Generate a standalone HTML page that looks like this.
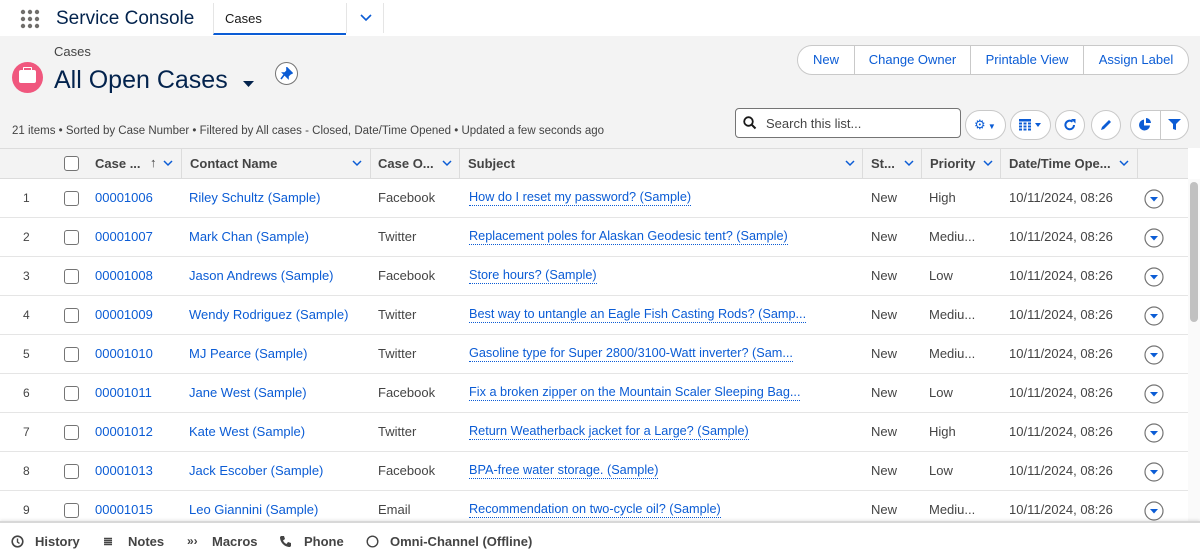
<!DOCTYPE html>
<html><head><meta charset="utf-8"><style>
*{box-sizing:border-box;margin:0;padding:0}
body{width:1200px;height:560px;overflow:hidden;background:#fff;font-family:"Liberation Sans",Arial,sans-serif;color:#181818;position:relative}
.a{position:absolute;white-space:nowrap}
.top{position:absolute;left:0;top:0;width:1200px;height:36px;background:#fff}
.hdr{position:absolute;left:0;top:36px;width:1200px;height:112px;background:#f3f3f3}
.th{position:absolute;top:148px;height:31px;width:1188px;background:#f3f3f3;border-top:1px solid #dcdcdc;border-bottom:1px solid #dcdcdc;font-size:13px;font-weight:bold;color:#444}
.th .c{position:absolute;top:0;height:29px;line-height:29px;border-right:1px solid #dcdcdc}
.chev{position:absolute;top:9px;width:10px;height:10px}
.row{position:absolute;left:0;width:1188px;height:39px;border-bottom:1px solid #e5e5e5;font-size:13px;color:#444}
.row span{position:absolute;top:11px;line-height:16px}
.lnk{color:#0b5cd5}
.sub{color:#0b5cd5;border-bottom:1px dotted #0b5cd5;line-height:15px!important;font-size:12.7px}
.cb{position:absolute;width:15px;height:15px;border:1px solid #747474;border-radius:3px;background:#fff}
.btn{position:absolute;height:30px;border:1px solid #c9c9c9;background:#fff;border-radius:15px}
</style></head><body>
<div class="top"></div>
<svg class="a" style="left:20px;top:9px" width="20" height="20"><g fill="#706e6b"><circle cx="3" cy="3" r="2.2"/><circle cx="10" cy="3" r="2.2"/><circle cx="17" cy="3" r="2.2"/><circle cx="3" cy="10" r="2.2"/><circle cx="10" cy="10" r="2.2"/><circle cx="17" cy="10" r="2.2"/><circle cx="3" cy="17" r="2.2"/><circle cx="10" cy="17" r="2.2"/><circle cx="17" cy="17" r="2.2"/></g></svg>
<div class="a" style="left:56px;top:8px;font-size:19px;color:#03234d">Service Console</div>
<div class="a" style="left:213px;top:3px;width:133px;height:32px;border-bottom:2px solid #0b5cd5;border-left:1px solid #e5e5e5;font-size:13px;padding:8px 0 0 11px;color:#181818">Cases</div>
<div class="a" style="left:346px;top:3px;width:38px;height:30px;border-left:1px solid #e5e5e5;border-right:1px solid #e5e5e5"></div>
<svg class="a" style="left:360px;top:14px" width="12" height="8"><path d="M1 1l5 5 5-5" stroke="#0b5cd5" stroke-width="1.6" fill="none"/></svg>
<div class="hdr"></div>
<div class="a" style="left:54px;top:44px;font-size:13px;color:#444">Cases</div>
<div class="a" style="left:12px;top:62px;width:31px;height:31px;border-radius:50%;background:#f0577e"></div>
<div class="a" style="left:19px;top:70px;width:17px;height:13px;background:#fff;border-radius:2px"></div>
<div class="a" style="left:23px;top:67px;width:9px;height:5px;border:1.5px solid #fff;border-bottom:none;border-radius:1px"></div>
<div class="a" style="left:54px;top:66px;font-size:25px;color:#03234d">All Open Cases</div>
<svg class="a" style="left:243px;top:81px" width="12" height="8"><path d="M0 0h11l-5.5 6z" fill="#03234d"/></svg>
<div class="a" style="left:275px;top:62px;width:23px;height:23px;border:1px solid #747474;border-radius:50%;background:#fff"></div>
<svg class="a" style="left:280px;top:67px" width="13" height="13"><path d="M7 1l5 5-2 1-2 2 0 2-5-5 2 0 2-2z M4 8l-3 4" stroke="#0b5cd5" stroke-width="1.6" fill="#0b5cd5"/></svg>
<div class="a" style="left:12px;top:125px;font-size:11.5px;color:#444">21 items • Sorted by Case Number • Filtered by All cases - Closed, Date/Time Opened • Updated a few seconds ago</div>
<div class="btn" style="left:797px;top:45px;width:392px;height:30px;font-size:13px;color:#0b5cd5">
<span class="a" style="left:0;width:57px;height:28px;border-right:1px solid #c9c9c9;text-align:center;line-height:28px">New</span>
<span class="a" style="left:57px;width:116px;height:28px;border-right:1px solid #c9c9c9;text-align:center;line-height:28px">Change Owner</span>
<span class="a" style="left:173px;width:113px;height:28px;border-right:1px solid #c9c9c9;text-align:center;line-height:28px">Printable View</span>
<span class="a" style="left:286px;width:104px;height:28px;text-align:center;line-height:28px">Assign Label</span></div>
<div class="a" style="left:735px;top:108px;width:226px;height:30px;border:1px solid #747474;border-radius:4px;background:#fff"></div>
<svg class="a" style="left:743px;top:116px" width="14" height="14"><circle cx="5.5" cy="5.5" r="4.3" stroke="#181818" stroke-width="1.8" fill="none"/><path d="M8.5 8.5l4 4" stroke="#181818" stroke-width="2"/></svg>
<div class="a" style="left:766px;top:116px;font-size:13px;color:#444">Search this list...</div>
<div class="btn" style="left:965px;top:110px;width:41px"></div>
<div class="a" style="left:974px;top:117px;font-size:13px;color:#0b5cd5">⚙<span style="font-size:8px"> ▼</span></div>
<div class="btn" style="left:1010px;top:110px;width:41px"></div>
<svg class="a" style="left:1019px;top:119px" width="12" height="12"><g fill="#0b5cd5"><rect x="0" y="0" width="12" height="2.5"/><rect x="0" y="3.5" width="3" height="2"/><rect x="4.5" y="3.5" width="3" height="2"/><rect x="9" y="3.5" width="3" height="2"/><rect x="0" y="6.5" width="3" height="2"/><rect x="4.5" y="6.5" width="3" height="2"/><rect x="9" y="6.5" width="3" height="2"/><rect x="0" y="9.5" width="3" height="2"/><rect x="4.5" y="9.5" width="3" height="2"/><rect x="9" y="9.5" width="3" height="2"/></g></svg>
<svg class="a" style="left:1035px;top:123px" width="6" height="4"><path d="M0 0h6l-3 4z" fill="#0b5cd5"/></svg>
<div class="btn" style="left:1055px;top:110px;width:30px"></div>
<svg class="a" style="left:1063px;top:118px" width="14" height="14"><path d="M11 7a4.3 4.3 0 1 1-1.5-3.3" stroke="#0b5cd5" stroke-width="2" fill="none"/><path d="M8 1h4.5v4.5z" fill="#0b5cd5"/></svg>
<div class="btn" style="left:1091px;top:110px;width:30px"></div>
<svg class="a" style="left:1099px;top:118px" width="14" height="14"><path d="M2 12l1-3 7-7 2 2-7 7z" fill="#0b5cd5"/></svg>
<div class="btn" style="left:1130px;top:110px;width:59px"></div>
<div class="a" style="left:1160px;top:111px;width:1px;height:28px;background:#c9c9c9"></div>
<svg class="a" style="left:1138px;top:118px" width="14" height="14"><path d="M6 1.5a5.5 5.5 0 1 0 6 6H6z" fill="#0b5cd5"/><path d="M8 0v5h5A5 5 0 0 0 8 0z" fill="#0b5cd5"/></svg>
<svg class="a" style="left:1168px;top:118px" width="13" height="13"><path d="M0 1h13l-5 5v6l-3-1v-5z" fill="#0b5cd5"/></svg>

<div class="th">
<div class="c" style="left:0;width:55px;border:none"></div>
<div class="cb" style="left:64px;top:7px"></div>
<div class="c" style="left:83px;width:99px;padding-left:12px;border-left:none">Case ...</div>
<div class="a" style="left:150px;top:6px;color:#444;font-size:13px">↑</div>
<svg class="chev" style="left:163px"><path d="M1 3l4 4 4-4" stroke="#0b5cd5" stroke-width="1.5" fill="none"/></svg>
<div class="c" style="left:182px;width:189px;padding-left:8px">Contact Name</div>
<svg class="chev" style="left:352px"><path d="M1 3l4 4 4-4" stroke="#0b5cd5" stroke-width="1.5" fill="none"/></svg>
<div class="c" style="left:371px;width:89px;padding-left:7px">Case O...</div>
<svg class="chev" style="left:442px"><path d="M1 3l4 4 4-4" stroke="#0b5cd5" stroke-width="1.5" fill="none"/></svg>
<div class="c" style="left:460px;width:403px;padding-left:8px">Subject</div>
<svg class="chev" style="left:845px"><path d="M1 3l4 4 4-4" stroke="#0b5cd5" stroke-width="1.5" fill="none"/></svg>
<div class="c" style="left:863px;width:59px;padding-left:8px">St...</div>
<svg class="chev" style="left:904px"><path d="M1 3l4 4 4-4" stroke="#0b5cd5" stroke-width="1.5" fill="none"/></svg>
<div class="c" style="left:922px;width:79px;padding-left:8px">Priority</div>
<svg class="chev" style="left:983px"><path d="M1 3l4 4 4-4" stroke="#0b5cd5" stroke-width="1.5" fill="none"/></svg>
<div class="c" style="left:1001px;width:137px;padding-left:8px">Date/Time Ope...</div>
<svg class="chev" style="left:1119px"><path d="M1 3l4 4 4-4" stroke="#0b5cd5" stroke-width="1.5" fill="none"/></svg>
</div>

<div class="row" style="top:179px"><span style="left:23px;font-size:12px">1</span><div class="cb" style="left:64px;top:12px"></div><span class="lnk" style="left:95px">00001006</span><span class="lnk" style="left:189px">Riley Schultz (Sample)</span><span style="left:378px">Facebook</span><span class="sub" style="left:469px">How do I reset my password? (Sample)</span><span style="left:871px">New</span><span style="left:929px">High</span><span style="left:1009px">10/11/2024, 08:26</span><svg class="a" style="left:1144px;top:10px" width="20" height="20"><circle cx="10" cy="10" r="9" stroke="#747474" stroke-width="1.2" fill="#fff"/><path d="M6 8h8l-4 4.5z" fill="#0b5cd5"/></svg></div>
<div class="row" style="top:218px"><span style="left:23px;font-size:12px">2</span><div class="cb" style="left:64px;top:12px"></div><span class="lnk" style="left:95px">00001007</span><span class="lnk" style="left:189px">Mark Chan (Sample)</span><span style="left:378px">Twitter</span><span class="sub" style="left:469px">Replacement poles for Alaskan Geodesic tent? (Sample)</span><span style="left:871px">New</span><span style="left:929px">Mediu...</span><span style="left:1009px">10/11/2024, 08:26</span><svg class="a" style="left:1144px;top:10px" width="20" height="20"><circle cx="10" cy="10" r="9" stroke="#747474" stroke-width="1.2" fill="#fff"/><path d="M6 8h8l-4 4.5z" fill="#0b5cd5"/></svg></div>
<div class="row" style="top:257px"><span style="left:23px;font-size:12px">3</span><div class="cb" style="left:64px;top:12px"></div><span class="lnk" style="left:95px">00001008</span><span class="lnk" style="left:189px">Jason Andrews (Sample)</span><span style="left:378px">Facebook</span><span class="sub" style="left:469px">Store hours? (Sample)</span><span style="left:871px">New</span><span style="left:929px">Low</span><span style="left:1009px">10/11/2024, 08:26</span><svg class="a" style="left:1144px;top:10px" width="20" height="20"><circle cx="10" cy="10" r="9" stroke="#747474" stroke-width="1.2" fill="#fff"/><path d="M6 8h8l-4 4.5z" fill="#0b5cd5"/></svg></div>
<div class="row" style="top:296px"><span style="left:23px;font-size:12px">4</span><div class="cb" style="left:64px;top:12px"></div><span class="lnk" style="left:95px">00001009</span><span class="lnk" style="left:189px">Wendy Rodriguez (Sample)</span><span style="left:378px">Twitter</span><span class="sub" style="left:469px">Best way to untangle an Eagle Fish Casting Rods? (Samp...</span><span style="left:871px">New</span><span style="left:929px">Mediu...</span><span style="left:1009px">10/11/2024, 08:26</span><svg class="a" style="left:1144px;top:10px" width="20" height="20"><circle cx="10" cy="10" r="9" stroke="#747474" stroke-width="1.2" fill="#fff"/><path d="M6 8h8l-4 4.5z" fill="#0b5cd5"/></svg></div>
<div class="row" style="top:335px"><span style="left:23px;font-size:12px">5</span><div class="cb" style="left:64px;top:12px"></div><span class="lnk" style="left:95px">00001010</span><span class="lnk" style="left:189px">MJ Pearce (Sample)</span><span style="left:378px">Twitter</span><span class="sub" style="left:469px">Gasoline type for Super 2800/3100-Watt inverter? (Sam...</span><span style="left:871px">New</span><span style="left:929px">Mediu...</span><span style="left:1009px">10/11/2024, 08:26</span><svg class="a" style="left:1144px;top:10px" width="20" height="20"><circle cx="10" cy="10" r="9" stroke="#747474" stroke-width="1.2" fill="#fff"/><path d="M6 8h8l-4 4.5z" fill="#0b5cd5"/></svg></div>
<div class="row" style="top:374px"><span style="left:23px;font-size:12px">6</span><div class="cb" style="left:64px;top:12px"></div><span class="lnk" style="left:95px">00001011</span><span class="lnk" style="left:189px">Jane West (Sample)</span><span style="left:378px">Facebook</span><span class="sub" style="left:469px">Fix a broken zipper on the Mountain Scaler Sleeping Bag...</span><span style="left:871px">New</span><span style="left:929px">Low</span><span style="left:1009px">10/11/2024, 08:26</span><svg class="a" style="left:1144px;top:10px" width="20" height="20"><circle cx="10" cy="10" r="9" stroke="#747474" stroke-width="1.2" fill="#fff"/><path d="M6 8h8l-4 4.5z" fill="#0b5cd5"/></svg></div>
<div class="row" style="top:413px"><span style="left:23px;font-size:12px">7</span><div class="cb" style="left:64px;top:12px"></div><span class="lnk" style="left:95px">00001012</span><span class="lnk" style="left:189px">Kate West (Sample)</span><span style="left:378px">Twitter</span><span class="sub" style="left:469px">Return Weatherback jacket for a Large? (Sample)</span><span style="left:871px">New</span><span style="left:929px">High</span><span style="left:1009px">10/11/2024, 08:26</span><svg class="a" style="left:1144px;top:10px" width="20" height="20"><circle cx="10" cy="10" r="9" stroke="#747474" stroke-width="1.2" fill="#fff"/><path d="M6 8h8l-4 4.5z" fill="#0b5cd5"/></svg></div>
<div class="row" style="top:452px"><span style="left:23px;font-size:12px">8</span><div class="cb" style="left:64px;top:12px"></div><span class="lnk" style="left:95px">00001013</span><span class="lnk" style="left:189px">Jack Escober (Sample)</span><span style="left:378px">Facebook</span><span class="sub" style="left:469px">BPA-free water storage. (Sample)</span><span style="left:871px">New</span><span style="left:929px">Low</span><span style="left:1009px">10/11/2024, 08:26</span><svg class="a" style="left:1144px;top:10px" width="20" height="20"><circle cx="10" cy="10" r="9" stroke="#747474" stroke-width="1.2" fill="#fff"/><path d="M6 8h8l-4 4.5z" fill="#0b5cd5"/></svg></div>
<div class="row" style="top:491px"><span style="left:23px;font-size:12px">9</span><div class="cb" style="left:64px;top:12px"></div><span class="lnk" style="left:95px">00001015</span><span class="lnk" style="left:189px">Leo Giannini (Sample)</span><span style="left:378px">Email</span><span class="sub" style="left:469px">Recommendation on two-cycle oil? (Sample)</span><span style="left:871px">New</span><span style="left:929px">Mediu...</span><span style="left:1009px">10/11/2024, 08:26</span><svg class="a" style="left:1144px;top:10px" width="20" height="20"><circle cx="10" cy="10" r="9" stroke="#747474" stroke-width="1.2" fill="#fff"/><path d="M6 8h8l-4 4.5z" fill="#0b5cd5"/></svg></div>
<div class="a" style="left:1188px;top:179px;width:12px;height:343px;background:#fafafa"></div>
<div class="a" style="left:1190px;top:182px;width:8px;height:140px;background:#c1c1c1;border-radius:4px"></div>

<div class="a" style="left:0;top:521px;width:1200px;height:39px;background:#fff;border-top:2px solid #d8d8d8;box-shadow:0 -1px 3px rgba(0,0,0,.1)"></div>
<div class="a" style="left:0;top:534px;font-size:13px;color:#444;font-weight:bold;width:1200px">
<svg class="a" style="left:11px;top:1px" width="13" height="13"><circle cx="6.5" cy="6.5" r="5.3" stroke="#444" stroke-width="1.6" fill="none"/><path d="M6.5 3.5v3.5l2 1.5" stroke="#444" stroke-width="1.4" fill="none"/></svg>
<span class="a" style="left:35px">History</span>
<span class="a" style="left:103px;font-size:12px">≣</span><span class="a" style="left:128px">Notes</span>
<span class="a" style="left:187px;font-size:12px">»›</span><span class="a" style="left:212px">Macros</span>
<svg class="a" style="left:279px;top:1px" width="13" height="13"><path d="M2 1l3 0 1 3-2 1.5a7 7 0 0 0 3.5 3.5L9 7l3 1v3l-1 1C5 12 1 7 1 2z" fill="#444"/></svg>
<span class="a" style="left:304px">Phone</span>
<svg class="a" style="left:366px;top:1px" width="13" height="13"><circle cx="6.5" cy="6.5" r="5.3" stroke="#444" stroke-width="1.4" fill="none"/></svg>
<span class="a" style="left:390px">Omni-Channel (Offline)</span>
</div>
</body></html>
